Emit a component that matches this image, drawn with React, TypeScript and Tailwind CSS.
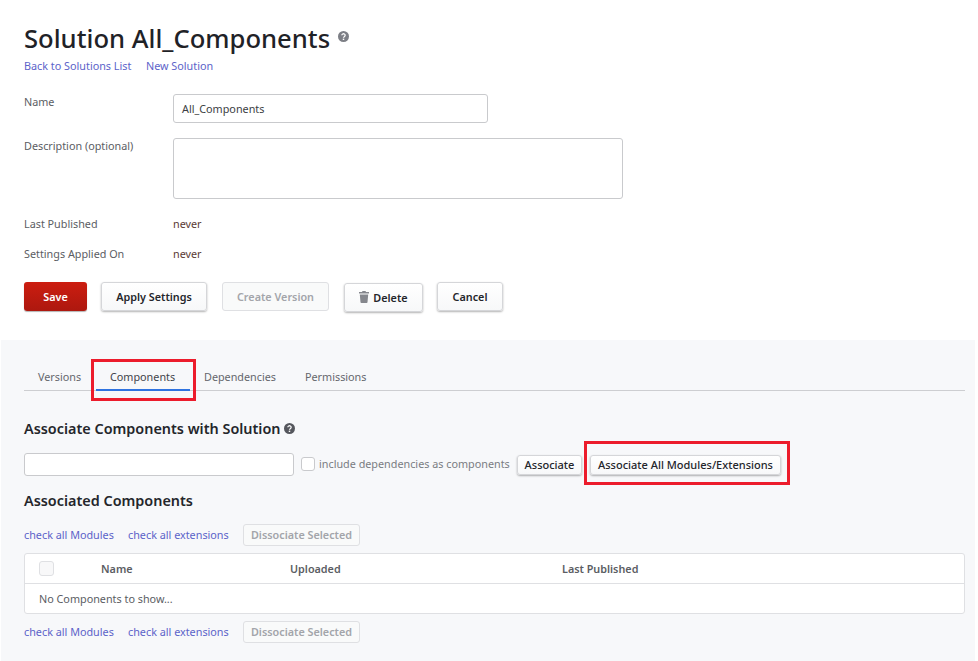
function HelpIcon({ className }: { className: string }) {
  return (
    <svg className={className} viewBox="0 0 12 12">
      <circle cx="6" cy="6" r="6" fill="currentColor" />
      <path d="M4.2 4.7a1.8 1.7 0 1 1 2.7 1.5c-.6.35-.9.6-.9 1.2" fill="none" stroke="#fff" strokeWidth="1.4" />
      <rect x="5.2" y="8.3" width="1.6" height="1.5" fill="#fff" />
    </svg>
  );
}

function TrashIcon() {
  return (
    <svg className="mb-[3px] h-[12px] w-[10px] text-[#85878d]" viewBox="0 0 10 12" fill="currentColor">
      <path d="M3.5 0h3l.5 1h3v1.6H0V1h3z" />
      <path d="M.8 3.4h8.4l-.7 7.8c0 .5-.4.8-.9.8H2.4c-.5 0-.9-.3-.9-.8z" />
    </svg>
  );
}

function Btn({ children, className = "" }: { children: React.ReactNode; className?: string }) {
  return (
    <button className={`flex items-center justify-center rounded-[3px] border border-[#d5d6d9] bg-gradient-to-b from-white to-[#f7f8f9] pt-[2px] text-[#24262b] shadow-[0_1px_2px_rgba(0,0,0,0.3)] ${className}`}>
      {children}
    </button>
  );
}

function DisabledBtn({ children, className = "" }: { children: React.ReactNode; className?: string }) {
  return (
    <button className={`flex items-center justify-center rounded-[3px] border border-[#dfe0e3] bg-[#f9fafa] font-semibold text-[#a3a5aa] ${className}`}>
      {children}
    </button>
  );
}

function CheckLinks() {
  return (
    <div className="flex h-[22px] items-center text-[10.8px]">
      <a className="w-[104px] text-[#5c63c9]">check all Modules</a>
      <a className="w-[115px] text-[#5c63c9]">check all extensions</a>
      <DisabledBtn className="h-[22px] w-[117px] text-[10.8px]">Dissociate Selected</DisabledBtn>
    </div>
  );
}

export default function App() {
  return (
    <div className="h-[661px] w-[978px] overflow-hidden bg-white font-['Noto_Sans',sans-serif] text-[#2d2f33]">
      <div className="h-[340px] px-6 pt-[20px]">
        <div className="flex h-[38px] items-center">
          <h1 className="text-[25.6px] leading-[38px] font-medium text-[#1f2227]">Solution All_Components</h1>
          <HelpIcon className="mb-[6px] ml-[8px] h-[11px] w-[11px] text-[#7d7f86]" />
        </div>
        <div className="flex h-[17px] items-center text-[10.8px] text-[#5c63c9]">
          <a className="w-[122px]">Back to Solutions List</a>
          <a>New Solution</a>
        </div>

        <div className="mt-[19px] flex h-[29px]">
          <div className="w-[149px] text-[10.8px] leading-[15px] text-[#5b5d63]">Name</div>
          <div className="flex h-[29px] w-[315px] items-center rounded-[3px] border border-[#c9cacd] px-2 pt-[2px] text-[10.8px] text-[#3c3e43]">All_Components</div>
        </div>
        <div className="mt-[15px] flex h-[61px]">
          <div className="w-[149px] text-[10.8px] leading-[15px] text-[#5b5d63]">Description (optional)</div>
          <div className="h-[61px] w-[450px] rounded-[3px] border border-[#c9cacd]" />
        </div>
        <div className="mt-[17px] flex h-[17px] items-center text-[10.8px]">
          <div className="w-[149px] text-[#5b5d63]">Last Published</div>
          <div className="text-[#5a3a34]">never</div>
        </div>
        <div className="mt-[13px] flex h-[17px] items-center text-[10.8px]">
          <div className="w-[149px] text-[#5b5d63]">Settings Applied On</div>
          <div className="text-[#5a3a34]">never</div>
        </div>

        <div className="mt-[19px] flex items-start text-[10.8px] font-semibold">
          <button className="h-[29px] w-[63px] rounded-[3px] bg-gradient-to-b from-[#cc1d10] to-[#ad180f] pt-[2px] font-semibold text-white shadow-[0_1px_1px_rgba(0,0,0,0.3)]">Save</button>
          <Btn className="ml-[14px] h-[29px] w-[106px]">Apply Settings</Btn>
          <DisabledBtn className="ml-[15px] h-[29px] w-[107px] pt-[2px]">Create Version</DisabledBtn>
          <Btn className="ml-[15px] mt-[1px] h-[29px] w-[79px] gap-[4px]">
            <TrashIcon />
            Delete
          </Btn>
          <Btn className="ml-[14px] h-[29px] w-[66px]">Cancel</Btn>
        </div>
      </div>

      <div className="ml-[1px] h-[321px] w-[974px] bg-[#f7f8fa] pt-[27px] pl-[23px]">
        <div className="flex h-[24px] w-[941px] items-start border-b border-[#cdced1] text-[10.8px] text-[#65676d]">
          <div className="w-[72px] pl-[14px] leading-[20px]">Versions</div>
          <div className="relative h-[24px] w-[94px] pl-[14px] leading-[20px] text-[#42444a]">
            Components
            <div className="absolute right-0 bottom-0 left-0 h-[2px] bg-[#2f73e0]" />
            <div className="absolute -top-[8px] -right-[6px] -bottom-[10px] -left-[5px] border-[3px] border-[#ec1c2c]" />
          </div>
          <div className="w-[101px] pl-[14px] leading-[20px]">Dependencies</div>
          <div className="pl-[14px] leading-[20px]">Permissions</div>
        </div>

        <div className="mt-[27px] flex h-[22px] items-center">
          <h2 className="text-[14.4px] font-semibold text-[#24262b]">Associate Components with Solution</h2>
          <HelpIcon className="mb-[2px] ml-[3px] h-[11px] w-[11px] text-[#55575d]" />
        </div>

        <div className="mt-[13px] flex h-[22px] items-center text-[10.8px]">
          <div className="h-[23px] w-[270px] rounded-[3px] border border-[#c9cacd] bg-white" />
          <div className="ml-[7px] h-[14px] w-[14px] rounded-[3px] border border-[#c9cacd] bg-white" />
          <span className="ml-[4px] w-[198px] whitespace-nowrap text-[#7a7c82]">include dependencies as components</span>
          <Btn className="mt-[1px] h-[20px] w-[65px] text-[11px] font-medium">Associate</Btn>
          <div className="relative mt-[1px] ml-[8px]">
            <Btn className="h-[20px] w-[191px] text-[11px] font-medium">Associate All Modules/Extensions</Btn>
            <div className="absolute -top-[14px] -right-[9px] -bottom-[10px] -left-[6px] border-[3px] border-[#ec1c2c]" />
          </div>
        </div>

        <h2 className="mt-[15px] h-[22px] text-[14.4px] leading-[22px] font-semibold text-[#24262b]">Associated Components</h2>

        <div className="mt-[12px]">
          <CheckLinks />
        </div>

        <div className="mt-[7px] w-[941px] rounded-[3px] border border-[#dfe0e3] bg-white text-[10.8px]">
          <div className="flex h-[30px] items-center border-b border-[#dfe0e3] font-semibold text-[#5b5d63]">
            <div className="ml-[14px] h-[15px] w-[15px] rounded-[3px] border border-[#dfe0e3] bg-[#f8f8f9]" />
            <div className="ml-[47px] w-[189px] pt-[2px]">Name</div>
            <div className="w-[272px] pt-[2px]">Uploaded</div>
            <div className="pt-[2px]">Last Published</div>
          </div>
          <div className="flex h-[29px] items-center pt-[2px] pl-[14px] text-[#5b5d63]">No Components to show...</div>
        </div>

        <div className="mt-[7px]">
          <CheckLinks />
        </div>
      </div>
    </div>
  );
}
